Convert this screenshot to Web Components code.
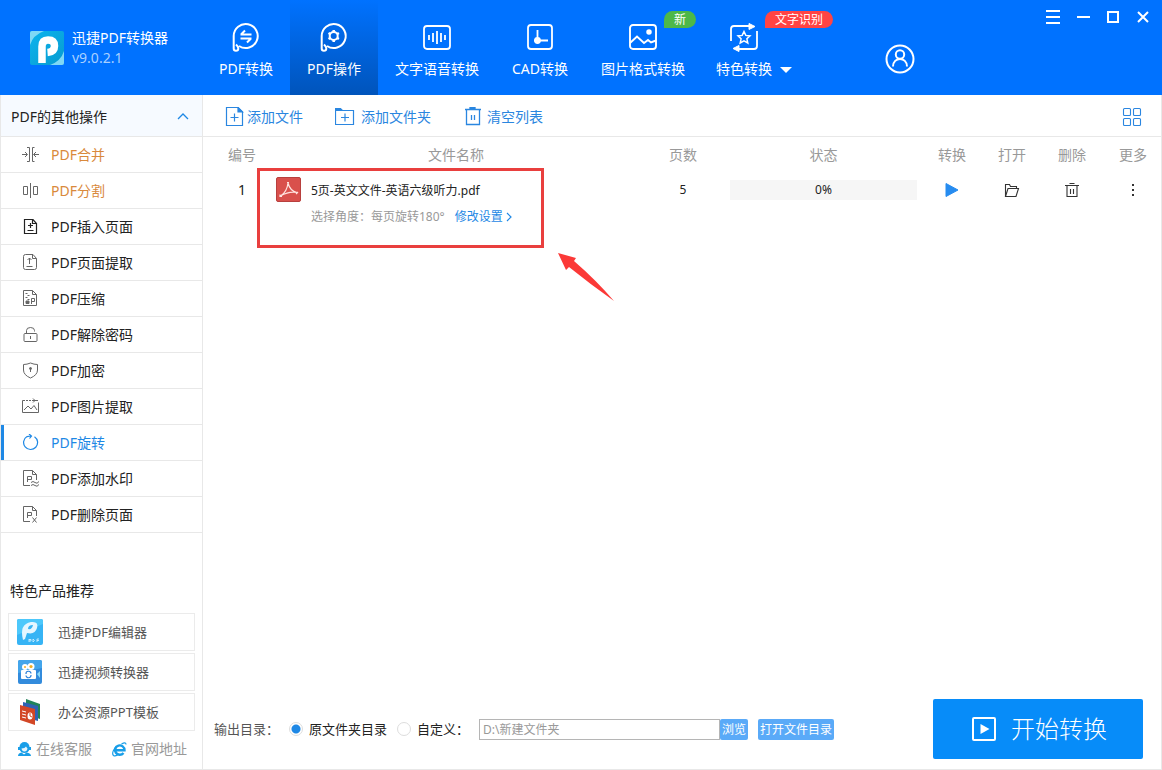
<!DOCTYPE html>
<html lang="zh-CN">
<head>
<meta charset="utf-8">
<title>迅捷PDF转换器</title>
<style>
html, body { margin: 0; height: 100%; }
body { font: 14px/20px "Noto Sans", "Noto Sans CJK SC", sans-serif; color: #222; background: #fff; }
</style>
</head>
<body>
<app-window></app-window>

<template id="t-window">
<style>
:host { display: flex; flex-direction: column; min-height: 100vh; }
.body { flex: 1; display: flex; box-sizing: border-box; border: 1px solid #e8e8e8; border-top: 0; }
main { flex: 1; min-width: 0; display: flex; flex-direction: column; }
file-table { flex: 1; }
</style>
<top-bar></top-bar>
<div class="body">
<side-bar></side-bar>
<main><tool-bar></tool-bar><file-table></file-table><output-bar></output-bar></main>
</div>
</template>

<template id="t-top">
<style>
:host { display: flex; height: 95px; background: #0072ff; color: #fff; position: relative; }
.brand { width: 202px; flex: none; box-sizing: border-box; padding: 28px 0 0 30px; display: flex; gap: 8px; }
.brand ui-icon { margin-top: 3px; }
.name { white-space: nowrap; }
.ver { color: #a9d0ff; }
nav { display: flex; }
.user { margin: 44px 0 0 95px; height: 30px; }
.win { position: absolute; right: 4px; top: 2px; display: flex; }
button { border: 0; padding: 0; background: none; color: inherit; display: block; }
.win button { width: 30px; height: 30px; display: grid; place-items: center; }
</style>
<div class="brand"><ui-icon name="logo" size="34"></ui-icon><div><div class="name">迅捷PDF转换器</div><div class="ver">v9.0.2.1</div></div></div>
<nav>
<nav-tab icon="convert">PDF转换</nav-tab>
<nav-tab icon="operate" active>PDF操作</nav-tab>
<nav-tab icon="voice" wide>文字语音转换</nav-tab>
<nav-tab icon="cad">CAD转换</nav-tab>
<nav-tab icon="picture" wide>图片格式转换<span slot="badge">新</span></nav-tab>
<nav-tab icon="special" caret>特色转换<span slot="badge">文字识别</span></nav-tab>
</nav>
<button class="user" aria-label="用户"><ui-icon name="user" size="30"></ui-icon></button>
<div class="win">
<button aria-label="菜单"><ui-icon name="menu" size="16"></ui-icon></button>
<button aria-label="最小化"><ui-icon name="min" size="16"></ui-icon></button>
<button aria-label="最大化"><ui-icon name="max" size="16"></ui-icon></button>
<button aria-label="关闭"><ui-icon name="close" size="16"></ui-icon></button>
</div>
</template>

<template id="t-tab">
<style>
:host { display: block; position: relative; width: 88px; }
:host([wide]) { width: 118px; }
:host([active]) { background: linear-gradient(#0072ff, #0054bb); }
button { width: 100%; height: 95px; border: 0; padding: 22px 0 0; margin: 0; background: none; color: inherit; font: inherit; display: flex; flex-direction: column; align-items: center; gap: 7px; white-space: nowrap; }
:host([caret]) button { width: 84px; }
.caret { display: none; position: absolute; left: 78px; top: 67px; border: 6px solid transparent; border-top-color: #fff; border-bottom: 0; }
:host([caret]) .caret { display: block; }
.badge { position: absolute; left: 80px; top: 11px; height: 17px; font-size: 12px; line-height: 17px; background: #4db848; border-radius: 9px 9px 9px 0; white-space: nowrap; padding: 0 10px; }
:host([caret]) .badge { left: 63px; background: #ff4444; }
.badge[hidden] { display: none; }
</style>
<button><ui-icon size="30"></ui-icon><span><slot></slot></span></button>
<i class="caret"></i><span class="badge"><slot name="badge"></slot></span>
</template>

<template id="t-side">
<style>
:host { display: flex; flex-direction: column; width: 201px; flex: none; border-right: 1px solid #e8e8e8; }
.head { height: 42px; display: flex; align-items: center; justify-content: space-between; padding: 2px 12px 0 10px; background: #f6faff; border: 0; border-bottom: 1px solid #e8e8e8; font: inherit; color: inherit; }
.promo { margin-top: auto; padding: 0 7px 10px; }
h2 { margin: 0 2px 12px; font: inherit; }
.cards { display: grid; gap: 2px; }
.links { display: flex; justify-content: space-between; padding: 8px 8px 0; }
.links a { display: flex; align-items: center; gap: 4px; color: #999; text-decoration: none; }
</style>
<button class="head"><span>PDF的其他操作</span><ui-icon name="up" size="14"></ui-icon></button>
<nav>
<menu-item icon="merge" hot>PDF合并</menu-item>
<menu-item icon="split" hot>PDF分割</menu-item>
<menu-item icon="insert">PDF插入页面</menu-item>
<menu-item icon="extract">PDF页面提取</menu-item>
<menu-item icon="compress">PDF压缩</menu-item>
<menu-item icon="unlock">PDF解除密码</menu-item>
<menu-item icon="encrypt">PDF加密</menu-item>
<menu-item icon="image">PDF图片提取</menu-item>
<menu-item icon="rotate" active>PDF旋转</menu-item>
<menu-item icon="water">PDF添加水印</menu-item>
<menu-item icon="remove">PDF删除页面</menu-item>
</nav>
<div class="promo">
<h2>特色产品推荐</h2>
<div class="cards">
<promo-card icon="editor">迅捷PDF编辑器</promo-card>
<promo-card icon="video">迅捷视频转换器</promo-card>
<promo-card icon="ppt">办公资源PPT模板</promo-card>
</div>
<div class="links"><a href="#"><ui-icon name="service" size="16"></ui-icon>在线客服</a><a href="#"><ui-icon name="ie" size="15"></ui-icon>官网地址</a></div>
</div>
</template>

<template id="t-item">
<style>
:host { display: block; border-bottom: 1px solid #e8e8e8; }
a { display: flex; align-items: center; gap: 12px; height: 35px; padding-left: 21px; color: #222; text-decoration: none; }
ui-icon { color: #666; }
span { padding-top: 1px; }
:host([icon="insert"]) ui-icon { color: #222; }
:host([hot]) a { color: #d9893b; }
:host([active]) a { color: #1e88e5; padding-left: 18px; border-left: 3px solid #1e88e5; }
:host([active]) ui-icon { color: #1e88e5; }
</style>
<a href="#"><ui-icon size="17"></ui-icon><span><slot></slot></span></a>
</template>

<template id="t-promo">
<style>
:host { display: block; }
a { display: flex; align-items: center; gap: 15px; height: 36px; padding-left: 8px; border: 1px solid #ebebeb; color: #555; text-decoration: none; font-size: 13px; }
</style>
<a href="#"><ui-icon size="26"></ui-icon><span><slot></slot></span></a>
</template>

<template id="t-tool">
<style>
:host { display: flex; align-items: center; height: 39px; border-bottom: 1px solid #e8e8e8; padding: 2px 19px 0 22px; gap: 32px; color: #2a86e0; }
button { display: flex; align-items: center; gap: 4px; border: 0; padding: 0; background: none; color: inherit; font: inherit; }
.file { gap: 2px; }
.folder { gap: 6px; }
.grid { margin-left: auto; }
</style>
<button class="file"><ui-icon name="addfile" size="20"></ui-icon>添加文件</button>
<button class="folder"><ui-icon name="addfolder" size="20"></ui-icon>添加文件夹</button>
<button><ui-icon name="clear" size="20"></ui-icon>清空列表</button>
<button class="grid" aria-label="视图"><ui-icon name="grid" size="20"></ui-icon></button>
</template>

<template id="t-table">
<style>
:host { display: block; }
table { width: 100%; table-layout: fixed; border-collapse: collapse; }
th, td { padding: 0; font-weight: 400; text-align: center; }
th { color: #999; height: 36px; }
td { vertical-align: top; padding-top: 7px; font-size: 12px; }
.no { width: 68px; padding-left: 5px; } .pg { width: 94px; } .st { width: 187px; padding-right: 5px; } .op { width: 60px; }
.last { width: 56px; padding-left: 3px; }
td.no { font-size: 14px; }
td.file { position: relative; text-align: left; padding-top: 4px; }
.row { display: flex; gap: 10px; }
.title { margin-top: 4px; }
.sub { display: flex; gap: 10px; margin-top: 6px; color: #999; }
.sub a { display: flex; align-items: center; gap: 1px; color: #1e88e5; text-decoration: none; }
.bar { background: #f6f6f6; height: 20px; line-height: 20px; }
.op button { display: block; margin: 0 auto; border: 0; padding: 1px 0; background: none; color: #333; }
.op .go { color: #268cf0; }
.mark { position: absolute; left: -19px; top: -5px; width: 281px; height: 74px; border: 3px solid #e93f3e; }
.arrow { position: absolute; left: 282px; top: 80px; width: 57px; height: 49px; }
</style>
<table>
<thead><tr><th class="no">编号</th><th>文件名称</th><th class="pg">页数</th><th class="st">状态</th><th class="op">转换</th><th class="op">打开</th><th class="op">删除</th><th class="op last">更多</th></tr></thead>
<tbody><tr>
<td class="no">1</td>
<td class="file">
<div class="row"><ui-icon name="pdf" size="25"></ui-icon><div><div class="title">5页-英文文件-英语六级听力.pdf</div><div class="sub"><span>选择角度：每页旋转180°</span><a href="#">修改设置<ui-icon name="right" size="10"></ui-icon></a></div></div></div>
<div class="mark"></div>
<svg class="arrow" viewBox="0 0 57 49"><path fill="#fb3937" d="M0 0 18 5 16 8 Q38 27 56 48 Q32 31 11 14L8 17Z"/></svg>
</td>
<td class="pg">5</td>
<td class="st"><div class="bar">0%</div></td>
<td class="op"><button class="go" aria-label="转换"><ui-icon name="play" size="18"></ui-icon></button></td>
<td class="op"><button aria-label="打开"><ui-icon name="open" size="18"></ui-icon></button></td>
<td class="op"><button aria-label="删除"><ui-icon name="trash" size="18"></ui-icon></button></td>
<td class="op last"><button aria-label="更多"><ui-icon name="more" size="18"></ui-icon></button></td>
</tr></tbody>
</table>
</template>

<template id="t-out">
<style>
:host { display: flex; align-items: center; padding: 0 18px 10px 11px; font-size: 13px; white-space: nowrap; }
.lab { color: #555; width: 75px; }
input[type=radio] { appearance: none; flex: none; width: 14px; height: 14px; margin: 0; border: 1px solid #ddd; border-radius: 50%; }
input[type=radio]:checked { background: radial-gradient(circle, #1e88e5 4px, #fff 5px); }
label { margin: 0 10px 0 6px; }
.custom { width: 58px; margin-right: 4px; }
input[type=text] { width: 241px; height: 21px; box-sizing: border-box; border: 1px solid #b5b5b5; padding: 0 3px; margin: 0; border-radius: 0; font: inherit; font-size: 12px; color: #999; background: #fff; }
.small { height: 21px; border: 0; border-radius: 2px; padding: 0 2px; background: #5aaaf8; color: #fff; font: inherit; font-size: 12px; line-height: 21px; }
.small + .small { margin-left: 10px; }
.start { margin-left: auto; width: 210px; height: 60px; border: 0; border-radius: 2px; background: #078cf9; color: #fff; font: inherit; font-size: 24px; font-weight: 300; display: flex; align-items: center; justify-content: center; gap: 14px; padding: 0 0 0 2px; }
</style>
<span class="lab">输出目录：</span>
<input type="radio" name="dir" id="src" checked><label for="src">原文件夹目录</label>
<input type="radio" name="dir" id="own"><label class="custom" for="own">自定义：</label>
<input type="text" aria-label="输出目录" value="D:\新建文件夹"><button class="small">浏览</button><button class="small">打开文件目录</button>
<button class="start"><ui-icon name="start" size="26"></ui-icon>开始转换</button>
</template>

<script>
const line = (size, width, body) =>
  `<svg viewBox="0 0 ${size} ${size}" fill="none" stroke="currentColor" stroke-width="${width}">${body}</svg>`;
const bubble = '<path d="M2.700 14A12 12 0 1 1 8 24M2.700 14V26.500a2.300 2.300 0 0 0 4.600 0Q7.300 24.500 5 22.500"/>';
const page = '<path d="M11 1.500H2.500V15.500H14.500V5.500ZM10.500 1.500V5.500H14.500"/>';
const ICONS = {
  logo: `<svg viewBox="0 0 34 34"><defs><linearGradient id="g" x2="1" y2="1"><stop stop-color="#0cb4ee"/><stop offset="1" stop-color="#079bd0"/></linearGradient></defs><rect width="34" height="34" rx="2" fill="url(#g)"/><path d="M0 2Q0 0 2 0H14Q3 4 0 14ZM34 20V32q0 2-2 2H20Q31 30 34 20Z" fill="#7fd8f5"/><path d="M12 32V15.500Q12 9 18 9Q24.500 9 24.500 15Q24.500 21 17.500 21.500" fill="none" stroke="#fff" stroke-width="7.500"/></svg>`,
  convert: line(30, 2, bubble + '<path d="M9.500 12.500H20.500M14 8.500l-4 4M20.500 16.500H9.500M16 20.500l4-4"/>'),
  operate: line(30, 2, bubble + '<circle cx="14.700" cy="14" r="4"/><path stroke-width="2.500" d="M14.700 8v2M14.700 18v2M9.500 11l1.700 1M18.200 16l1.700 1M9.500 17l1.700-1M18.200 12l1.700-1"/>'),
  voice: line(30, 1.8, '<rect x="2" y="4" width="26" height="23" rx="3"/><path d="M7 13v5M11 11v9M15 9v13M19 11v9M23 13v5"/>'),
  cad: line(30, 1.8, '<rect x="3" y="3" width="24" height="24" rx="3"/><path d="M12.500 8v13M9 18.500h14"/><circle cx="12.500" cy="18.500" r="2.500" fill="currentColor"/>'),
  picture: line(30, 1.9, '<rect x="2" y="3" width="26" height="24" rx="3"/><path d="M2 21 9 14.500 16 21 20 18 23 20.500 28 18.500"/><circle cx="21" cy="10" r="1.800" fill="currentColor"/>'),
  special: line(30, 1.8, '<path d="M2 19V7q0-3 3-3H20M28 9V24q0 3-3 3H10"/><path fill="currentColor" stroke-width="1" d="M20 1.500 26 4.500 20 7.500ZM10 23.500 4 26.500 10 29.500Z"/><path stroke-width="1.500" d="m15 9.500 1.800 3.900 4.200.5-3.100 2.900.9 4.200-3.800-2.100-3.800 2.100.9-4.200L9 13.900l4.200-.5Z"/>'),
  user: line(30, 2, '<circle cx="15" cy="15" r="13.500"/><circle cx="15" cy="10.500" r="4.200"/><path d="M8 22.500C8 12.500 22 12.500 22 22.500"/>'),
  menu: line(16, 2, '<path d="M1 2h14M1 8h14M1 14h14"/>'),
  min: line(16, 2, '<path d="M2 8h13"/>'),
  max: line(16, 2, '<path d="M3 3h10v10H3z"/>'),
  close: line(16, 2, '<path d="m3 3 10 10M13 3 3 13"/>'),
  up: '<svg viewBox="0 0 14 14" fill="none" stroke="#1e88e5" stroke-width="1.300"><path d="m2 9 5-5 5 5"/></svg>',
  right: line(10, 1.2, '<path d="m3 1 4 4-4 4"/>'),
  merge: line(17, 1, '<path d="M5 1.500h2.500v14H5M12.500 1.500H10.500v14h2M0 8.500h5M3 6l2.500 2.500L3 11M17 8.500h-5M14 6l-2.500 2.500L14 11"/>'),
  split: line(17, 1, '<path d="M1.500 4.500h4v8h-4zM11.500 4.500h4v8h-4zM8.500 1v15"/>'),
  insert: line(17, 1.2, page + '<path d="M8.500 5v5M6 7.500h5M5.500 12.500h6"/>'),
  extract: line(17, 1, '<path d="M11 .5H3.500q-2 0-2 2v11q0 2 2 2h9q2 0 2-2v-9ZM10.500.5V4.500h4M7.500 10V4M5.500 6l2-2 2 2M4.500 12.500h6"/>'),
  compress: line(17, 1, '<path d="M10.500.5h-9v15h13v-11ZM10.500.5v4h4M3.500 3.500h2M5.500 5.500h2M3.500 7.500h2M5.500 9.500h2M9.500 14V8.500h3v3h-3"/><path d="M4 11h3v2.500H4z" fill="currentColor"/>'),
  unlock: line(17, 1, '<rect x="2" y="7.500" width="13" height="8" rx="1"/><path d="M4.500 7.500V4.500q0-3 4-3t4 3v1M8.500 10v3"/>'),
  encrypt: line(17, 1, '<path d="M1.500 2.500q3.500 0 7-1.500 3.500 1.500 7 1.500V8q0 5-7 8-7-3-7-8Z"/><circle cx="8.500" cy="6.500" r="1" fill="currentColor"/><path d="M8.500 7v3"/>'),
  image: line(17, 1, '<path d="M3 2.500H.5v12h16v-10"/><path d="M4 2.500h8" stroke-dasharray="2 1"/><path d="m2 12 4-4 3 3 3-3.500 3 4.500M11 .5l2 2-2 2M12 2.500h4"/>'),
  rotate: line(17, 1.2, '<path d="M5 2.500A7 7 0 1 0 12.500 2.700M5 2.700 8.500 2M7 0l2.500 2L7.500 4.500"/>'),
  water: line(17, 1, '<path d="M8 15.500H1.500V.5h9l4 4V10M10.500.5v4h4M5.500 12V6.500h4v3h-4M9 12.500q2-2 4 0t4-1M9 15.500q2-2 4 0t4-1"/>'),
  remove: line(17, 1, '<path d="M8 15.500H1.500V.5h9l4 4V10M10.500.5v4h4M5.500 12V6.500h4v3h-4M10.500 11.500l4 5M14.500 11.500l-4 5"/>'),
  editor: '<svg viewBox="0 0 26 26"><rect width="26" height="26" rx="2" fill="#36b4f5"/><path d="M0 16V2q0-2 2-2h22q2 0 2 2v3Z" fill="#4dc8fb"/><path d="M6 21Q2 5 14 3q8-1 6 6-2 7-10 5L8 20Z" fill="#e4f6ff"/><path d="M11 10q0-4 5-4-1 5-5 4Z" fill="#38b4f4"/><path d="M12 20v3M12 20.500h2v1.500h-2M16 20v3q3-1.500 0-3M20 23v-3h2M20 21.500h2" fill="none" stroke="#d9f2ff" stroke-width=".8"/></svg>',
  video: '<svg viewBox="0 0 26 26"><rect x="1" y="1" width="24" height="24" rx="2" fill="#328bdc"/><path d="M1 14V3q0-2 2-2h20q2 0 2 2v6Z" fill="#43a5eb"/><rect x="4" y="11" width="15" height="9" rx="1" fill="#fff"/><circle cx="8" cy="8" r="3" fill="#fff"/><circle cx="14" cy="7.500" r="3.500" fill="#fff"/><circle cx="8" cy="8" r="1" fill="#f0ae24"/><circle cx="14" cy="7.500" r="1.600" fill="#f0ae24"/><path d="m20 15 3-3v7Z" fill="#8bdafa"/><path d="M9 15a2.500 2.500 0 0 1 5-.5M14 16a2.500 2.500 0 0 1-5 .500" fill="none" stroke="#2e82d8" stroke-width="1.200"/></svg>',
  ppt: '<svg viewBox="0 0 26 26"><path d="m9 0 14 5v15L9 15Z" fill="#21835a"/><path d="m6 3 15 4v15L6 18Z" fill="#2f62b4"/><path d="m3 6 15 4v16L3 21Z" fill="#d24726"/><ellipse cx="13" cy="17" rx="2.500" ry="3.500" fill="#fff"/><path d="m5 12 4 1M5 15l4 1M5 18l4 1" stroke="#fff"/><path d="M13 14V17l2 1" stroke="#d24726" fill="none"/></svg>',
  service: '<svg viewBox="0 0 16 16" fill="#189ee8"><path d="M2 15q0-3 3.500-3.500L8 13.500l2.500-2Q15 12 15 15Z"/><path d="M3.500 6a5 5 0 0 1 10 0v2.500Q12 12 8.500 12T3.500 8.500Z"/><path d="M2 6h2v3H2zM13 6h2v3h-2z"/><path d="M5.500 7.500Q9 7.500 10 5.500 11 7 11.500 7.500 11 10.500 8.500 10.500T5.500 7.500Z" fill="#e3f4fd"/></svg>',
  ie: '<svg viewBox="0 0 15 15" fill="none" stroke="#189ee8"><path d="M3.500 8.200H12.500A4.700 4.700 0 1 0 11.500 11" stroke-width="2.400"/><path d="M9.500 2Q14-.5 14 2.500M4 4.500Q-1 11 1.500 13.500q1.500 1 4-.5" stroke-width="1.200"/></svg>',
  addfile: line(20, 1.2, '<path d="M13 .5H1.500v18h16V5ZM5.500 10.500h8M9.500 6.500v8"/><path fill="currentColor" d="M13 .5V5h4.500Z"/>'),
  addfolder: line(20, 1.2, '<path d="M.5 3.500h18v14H.5ZM6 10.500h8M10 6.500v8"/><path d="M.5 1.500h5l2 2h-7Z" fill="currentColor"/>'),
  clear: line(20, 1.3, '<path d="M2 2.500h16M3.500 2.500v15h13v-15M8.500 8v5M11.500 8v5"/><path d="M7 0h5v2H7z" fill="currentColor"/>'),
  grid: line(20, 1.1, '<rect x="1.500" y="1.500" width="7" height="7" rx="1"/><rect x="11.500" y="1.500" width="7" height="7" rx="1"/><rect x="1.500" y="11.500" width="7" height="7" rx="1"/><rect x="11.500" y="11.500" width="7" height="7" rx="1"/>'),
  pdf: '<svg viewBox="0 0 25 25"><rect x=".5" y=".5" width="24" height="24" rx="1.500" fill="#d9504c" stroke="#b8403e"/><path d="M12 6q2 8 9 9.500-8-1.500-16.500 3.500Q11 15 12 6ZM11 5.500h2M20 17l2-2M4 17.500v2h2" fill="none" stroke="#ffe3df" stroke-width="1.200"/></svg>',
  play: '<svg viewBox="0 0 18 18" fill="currentColor" stroke="currentColor" stroke-linejoin="round"><path d="M3 2.500 15 9 3 15.500Z"/></svg>',
  open: line(18, 1.1, '<path d="M2.500 15.500v-12h4l1 2h6v2M2.500 15.500l2.500-8h10.500l-2.500 8Z"/>'),
  trash: line(18, 1.1, '<path d="M2 4.500h14M6.500 2.500h5M4 4.500v11h10v-11M7.500 8v5M10.500 8v5"/>'),
  more: '<svg viewBox="0 0 18 18" fill="currentColor"><path d="M8 3h2v2H8zM8 8h2v2H8zM8 13h2v2H8z"/></svg>',
  start: line(26, 2, '<rect x="2" y="2" width="22" height="22" rx="1"/><path fill="currentColor" stroke="none" d="m9.500 8 9 5-9 5Z"/>'),
};

customElements.define('ui-icon', class extends HTMLElement {
  static observedAttributes = ['name'];
  constructor() { super(); this.attachShadow({ mode: 'open' }); }
  connectedCallback() { this.draw(); }
  attributeChangedCallback() { this.draw(); }
  draw() {
    const size = this.getAttribute('size') || 16;
    this.shadowRoot.innerHTML =
      `<style>:host{display:inline-block;flex:none;width:${size}px;height:${size}px}svg{display:block;width:100%;height:100%}</style>` +
      (ICONS[this.getAttribute('name')] || '');
  }
});

const define = (tag, templateId, setup) => customElements.define(tag, class extends HTMLElement {
  connectedCallback() {
    if (this.shadowRoot) return;
    const root = this.attachShadow({ mode: 'open' });
    root.append(document.getElementById(templateId).content.cloneNode(true));
    if (setup) setup(this, root);
  }
});
const passIcon = (host, root) => root.querySelector('ui-icon').setAttribute('name', host.getAttribute('icon'));

define('nav-tab', 't-tab', (host, root) => {
  passIcon(host, root);
  root.querySelector('.badge').hidden = !host.querySelector('[slot=badge]');
});
define('menu-item', 't-item', passIcon);
define('promo-card', 't-promo', passIcon);
define('top-bar', 't-top');
define('side-bar', 't-side');
define('tool-bar', 't-tool');
define('file-table', 't-table');
define('output-bar', 't-out');
define('app-window', 't-window');
</script>
</body>
</html>
